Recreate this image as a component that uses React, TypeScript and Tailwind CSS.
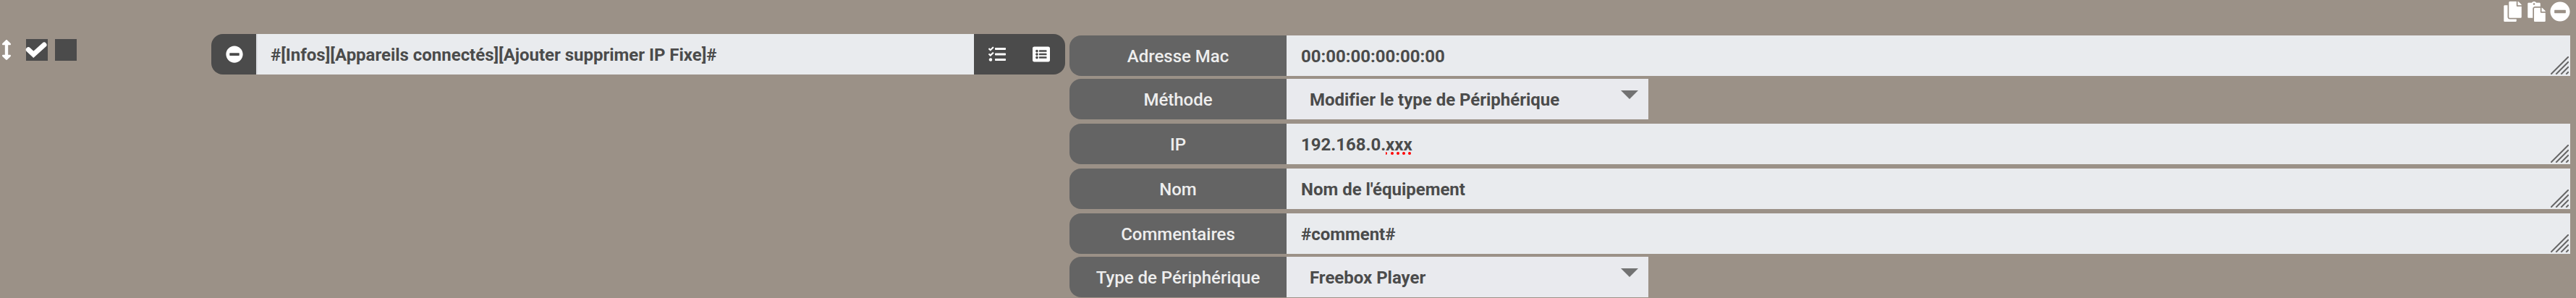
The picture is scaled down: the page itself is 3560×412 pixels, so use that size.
import type { ReactNode } from "react";
import { FaArrowsAltV, FaCopy, FaListAlt, FaMinusCircle, FaPaste, FaTasks } from "react-icons/fa";

function Label({ children }: { children: ReactNode }) {
  return (
    <div className="flex h-14 w-[300px] shrink-0 items-center justify-center rounded-l-[16px] bg-[#646464] pt-[2px] text-[24px] font-medium text-[#eeeeee]">
      {children}
    </div>
  );
}

function Grip() {
  return (
    <svg className="absolute right-[2px] bottom-[2px] h-[25px] w-[25px]" viewBox="0 0 25 25" fill="none" stroke="#666666" strokeWidth="2" strokeLinecap="square">
      <path d="M1 24L24 1M8 24L24 8M15 24L24 15M22 24L24 22" />
    </svg>
  );
}

function TextField({ children }: { children: ReactNode }) {
  return (
    <div className="relative flex h-14 grow items-center bg-[#e9ebee] pt-[2px] pl-5 whitespace-pre">
      {children}
      <Grip />
    </div>
  );
}

function SelectField({ children }: { children: ReactNode }) {
  return (
    <div className="flex h-14 w-[500px] items-center justify-between bg-[#e9eaee] pt-[2px] pr-[14px] pl-8">
      {children}
      <svg className="mt-[14px] h-3 w-6 self-start" viewBox="0 0 24 12" fill="#727272">
        <path d="M0 0H24L12 12Z" />
      </svg>
    </div>
  );
}

export default function App() {
  return (
    <div className="flex h-[412px] w-[3560px] overflow-hidden bg-[#9b9187] font-[Roboto,sans-serif] text-[24px] leading-8 font-bold tracking-[-0.02px] text-[#4b4b4b]">
      <div className="mt-[54px] flex h-[30px] w-[292px] shrink-0 items-center pl-[2px] text-white">
        <FaArrowsAltV className="h-7 w-[14px]" />
        <div className="ml-5 size-[30px] bg-[#4b4b4b]">
          <svg className="size-[30px] overflow-visible" viewBox="0 0 30 30" fill="none" stroke="currentColor" strokeWidth="7" strokeLinecap="round">
            <path d="M3.3 14.7L10.3 21.3L25 8" />
          </svg>
        </div>
        <div className="ml-[10px] size-[30px] bg-[#4b4b4b]" />
      </div>
      <div className="mt-[47px] flex h-14 w-[1180px] shrink-0 overflow-hidden rounded-[16px] bg-[#4b4b4b] text-white">
        <div className="flex w-[62px] items-center pl-5">
          <FaMinusCircle className="size-6" />
        </div>
        <div className="flex w-[992px] items-center border-l-2 border-[#dcdee2] bg-[#e9ebee] pt-[2px] pl-[18px] text-[#4b4b4b]">
          #[Infos][Appareils connectés][Ajouter supprimer IP Fixe]#
        </div>
        <div className="flex grow items-center gap-[37px] pl-5">
          <FaTasks className="size-6" />
          <FaListAlt className="size-6" />
        </div>
      </div>
      <div className="ml-[6px] flex w-[2074px] shrink-0 flex-col">
        <div className="flex h-[49px] items-start justify-end gap-2 pt-[2px] text-white">
          <FaCopy className="h-7 w-[25px]" />
          <FaPaste className="h-7 w-[25px]" />
          <FaMinusCircle className="-ml-[2px] size-7" />
        </div>
        <div className="flex">
          <Label>Adresse Mac</Label>
          <TextField>00:00:00:00:00:00</TextField>
        </div>
        <div className="mt-1 flex">
          <Label>Méthode</Label>
          <SelectField>Modifier le type de Périphérique</SelectField>
        </div>
        <div className="mt-[6px] flex">
          <Label>IP</Label>
          <TextField>
            192.168.0.
            <span className="relative">
              xxx
              <svg className="absolute bottom-[2px] left-0 h-1 w-9" viewBox="0 0 36 4" fill="#ff0000">
                <path d="M0 0a2 2 0 0 1 0 4Z" />
                <circle cx="9" cy="2" r="2" />
                <circle cx="17" cy="2" r="2" />
                <circle cx="25" cy="2" r="2" />
                <circle cx="33" cy="2" r="2" />
              </svg>
            </span>
          </TextField>
        </div>
        <div className="mt-[6px] flex">
          <Label>Nom</Label>
          <TextField>Nom de l'équipement</TextField>
        </div>
        <div className="mt-[6px] flex">
          <Label>Commentaires</Label>
          <TextField>#comment#</TextField>
        </div>
        <div className="mt-1 flex">
          <Label>Type de Périphérique</Label>
          <SelectField>Freebox Player</SelectField>
        </div>
      </div>
    </div>
  );
}
